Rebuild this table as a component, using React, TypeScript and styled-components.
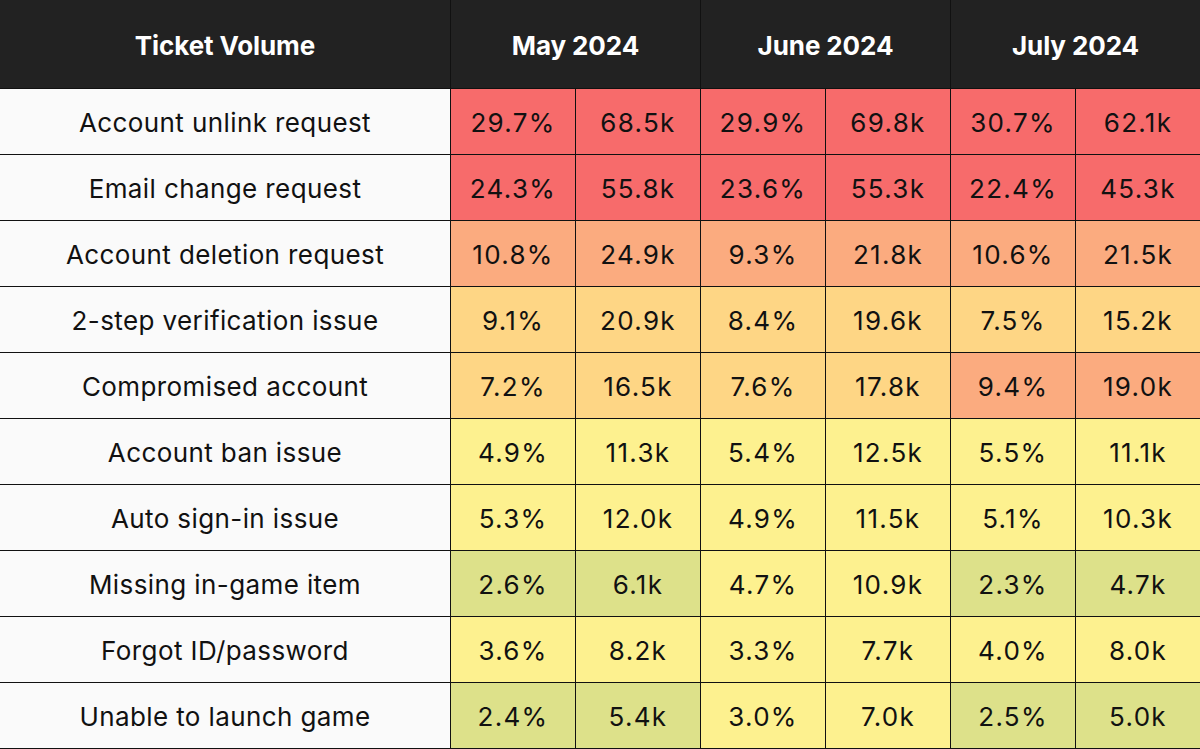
import React from 'react';
import styled, { createGlobalStyle } from 'styled-components';

const GlobalStyle = createGlobalStyle`
  html, body {
    margin: 0;
    padding: 0;
    background: #fafafa;
  }
  body {
    font-family: Inter, "Noto Sans", "Liberation Sans", sans-serif;
  }
`;

type Tone = 'red' | 'orange' | 'amber' | 'yellow' | 'lime';

const toneColors: Record<Tone, string> = {
  red: '#f76b6b',
  orange: '#fbab7f',
  amber: '#fed685',
  yellow: '#fdf18f',
  lime: '#dde18a',
};

interface Cell {
  value: string;
  tone: Tone;
}

interface Row {
  label: string;
  cells: Cell[];
}

const c = (value: string, tone: Tone): Cell => ({ value, tone });

const months = ['May 2024', 'June 2024', 'July 2024'];

const rows: Row[] = [
  {
    label: 'Account unlink request',
    cells: [c('29.7%', 'red'), c('68.5k', 'red'), c('29.9%', 'red'), c('69.8k', 'red'), c('30.7%', 'red'), c('62.1k', 'red')],
  },
  {
    label: 'Email change request',
    cells: [c('24.3%', 'red'), c('55.8k', 'red'), c('23.6%', 'red'), c('55.3k', 'red'), c('22.4%', 'red'), c('45.3k', 'red')],
  },
  {
    label: 'Account deletion request',
    cells: [c('10.8%', 'orange'), c('24.9k', 'orange'), c('9.3%', 'orange'), c('21.8k', 'orange'), c('10.6%', 'orange'), c('21.5k', 'orange')],
  },
  {
    label: '2-step verification issue',
    cells: [c('9.1%', 'amber'), c('20.9k', 'amber'), c('8.4%', 'amber'), c('19.6k', 'amber'), c('7.5%', 'amber'), c('15.2k', 'amber')],
  },
  {
    label: 'Compromised account',
    cells: [c('7.2%', 'amber'), c('16.5k', 'amber'), c('7.6%', 'amber'), c('17.8k', 'amber'), c('9.4%', 'orange'), c('19.0k', 'orange')],
  },
  {
    label: 'Account ban issue',
    cells: [c('4.9%', 'yellow'), c('11.3k', 'yellow'), c('5.4%', 'yellow'), c('12.5k', 'yellow'), c('5.5%', 'yellow'), c('11.1k', 'yellow')],
  },
  {
    label: 'Auto sign-in issue',
    cells: [c('5.3%', 'yellow'), c('12.0k', 'yellow'), c('4.9%', 'yellow'), c('11.5k', 'yellow'), c('5.1%', 'yellow'), c('10.3k', 'yellow')],
  },
  {
    label: 'Missing in-game item',
    cells: [c('2.6%', 'lime'), c('6.1k', 'lime'), c('4.7%', 'yellow'), c('10.9k', 'yellow'), c('2.3%', 'lime'), c('4.7k', 'lime')],
  },
  {
    label: 'Forgot ID/password',
    cells: [c('3.6%', 'yellow'), c('8.2k', 'yellow'), c('3.3%', 'yellow'), c('7.7k', 'yellow'), c('4.0%', 'yellow'), c('8.0k', 'yellow')],
  },
  {
    label: 'Unable to launch game',
    cells: [c('2.4%', 'lime'), c('5.4k', 'lime'), c('3.0%', 'yellow'), c('7.0k', 'yellow'), c('2.5%', 'lime'), c('5.0k', 'lime')],
  },
];

const Table = styled.div`
  display: grid;
  grid-template-columns: 450px repeat(6, 1fr);
  grid-template-rows: 88px repeat(10, 65px);
  gap: 1px;
  width: 1200px;
  padding-bottom: 1px;
  background: #111111;
`;

const HeadCell = styled.div<{ $span?: number }>`
  grid-column: span ${p => p.$span ?? 1};
  display: flex;
  align-items: center;
  justify-content: center;
  padding-top: 2px;
  background: #222222;
  color: #ffffff;
  font-size: 26px;
  font-weight: 700;
  letter-spacing: -0.1px;
`;

const LabelCell = styled.div`
  display: flex;
  align-items: center;
  justify-content: center;
  padding-top: 2px;
  background: #fafafa;
  color: #111111;
  font-size: 26px;
  font-weight: 400;
  letter-spacing: 0.4px;
`;

const ValueCell = styled.div<{ $tone: Tone }>`
  display: flex;
  align-items: center;
  justify-content: center;
  padding-top: 2px;
  background: ${p => toneColors[p.$tone]};
  color: #111111;
  font-size: 26px;
  font-weight: 400;
  letter-spacing: 1.3px;
`;

export default function App() {
  return (
    <>
      <GlobalStyle />
      <Table>
        <HeadCell>Ticket Volume</HeadCell>
        {months.map(m => (
          <HeadCell key={m} $span={2}>
            {m}
          </HeadCell>
        ))}
        {rows.map(row => (
          <React.Fragment key={row.label}>
            <LabelCell>{row.label}</LabelCell>
            {row.cells.map((cell, i) => (
              <ValueCell key={i} $tone={cell.tone}>
                {cell.value}
              </ValueCell>
            ))}
          </React.Fragment>
        ))}
      </Table>
    </>
  );
}
